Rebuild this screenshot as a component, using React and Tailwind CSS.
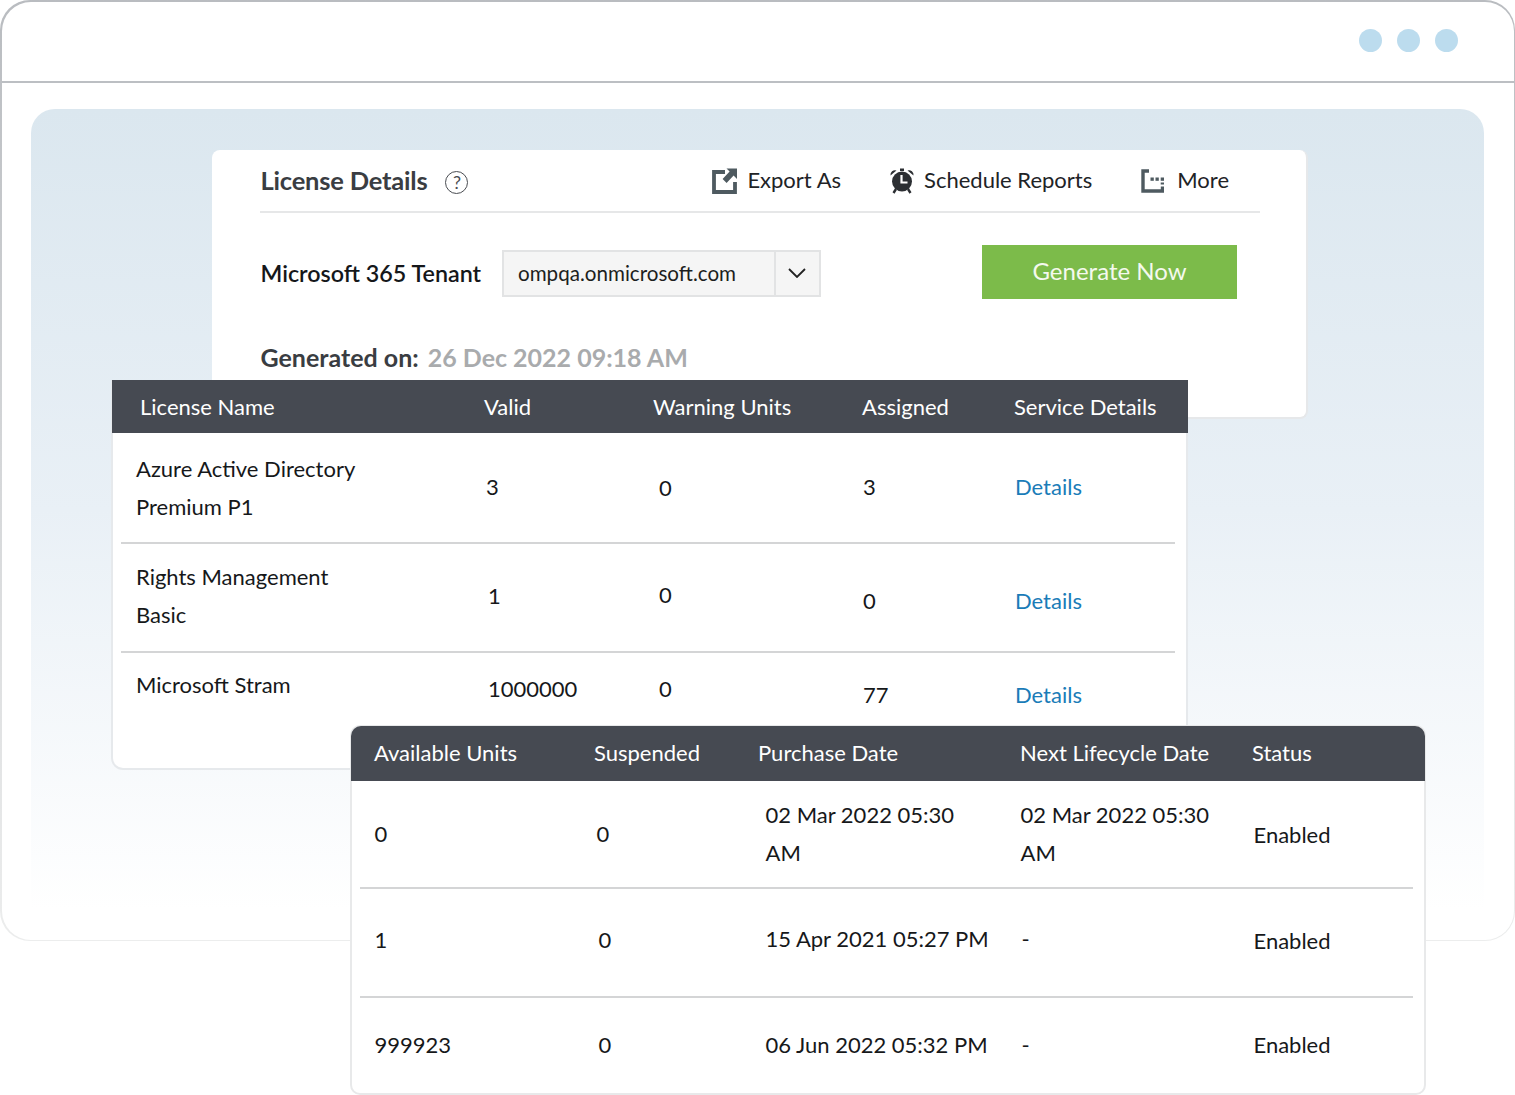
const font = "font-['Lato',sans-serif]";

function ExportIcon() {
  return (
    <svg width="25" height="26" viewBox="0 0 25 26" className="block">
      <path d="M13 4H2v20h21v-10" fill="none" stroke="#4e5a60" strokeWidth="3.800" />
      <path d="M14.500 0.500H25V11l-3.400-3.400-7 7.400-4-4 7-7.400z" fill="#4e5a60" />
    </svg>
  );
}

function AlarmIcon() {
  return (
    <svg width="24" height="26" viewBox="0 0 24 26" className="block">
      <path d="M0.500 7.500a4.500 4.500 0 0 1 6-5z M23.500 7.500a4.500 4.500 0 0 0-6-5z" fill="#2c2f33" />
      <rect x="10" y="0.500" width="4" height="2.500" fill="#2c2f33" />
      <circle cx="12" cy="13.500" r="10" fill="#2c2f33" />
      <path d="M11.500 7v7.500h6" fill="none" stroke="#fff" strokeWidth="2.200" />
      <path d="M6 21l-2.500 4M18 21l2.500 4" stroke="#2c2f33" strokeWidth="2.400" />
    </svg>
  );
}

function MoreIcon() {
  return (
    <svg width="23" height="24" viewBox="0 0 23 24" className="block">
      <path d="M8 2H2v20h19.500v-4.500" fill="none" stroke="#4e5a60" strokeWidth="3.400" />
      <rect x="9.500" y="8.500" width="3.300" height="3.300" fill="#4e5a60" />
      <rect x="14.500" y="8.500" width="3.300" height="3.300" fill="#4e5a60" />
      <rect x="19.700" y="8.500" width="3.300" height="3.300" fill="#4e5a60" />
      <rect x="19.700" y="13.500" width="3.300" height="2" fill="#4e5a60" />
    </svg>
  );
}

const licenseRows = [
  {
    h: "h-[111px]",
    line: true,
    cells: [
      ["pt-[17px]", <>Azure Active Directory<br />Premium P1</>],
      ["pt-[35px]", "3"],
      ["pt-[36px]", "0"],
      ["pt-[35px]", "3"],
      ["pt-[35px] text-[#1a7cb8]", "Details"],
    ],
  },
  {
    h: "h-[109px]",
    line: true,
    cells: [
      ["pt-[14px]", <>Rights Management<br />Basic</>],
      ["pt-[33px] pl-[2px]", "1"],
      ["pt-[32px]", "0"],
      ["pt-[38px]", "0"],
      ["pt-[38px] text-[#1a7cb8]", "Details"],
    ],
  },
  {
    h: "h-[99px]",
    cells: [
      ["pt-[13px]", "Microsoft Stram"],
      ["pt-[17px] pl-[2px]", "1000000"],
      ["pt-[17px]", "0"],
      ["pt-[23px]", "77"],
      ["pt-[23px] text-[#1a7cb8]", "Details"],
    ],
  },
];

const unitRows = [
  {
    h: "h-[108px]",
    line: true,
    cells: [
      ["pt-[34px]", "0"],
      ["pt-[34px]", "0"],
      ["pt-[15px]", <>02 Mar 2022 05:30<br />AM</>],
      ["pt-[15px]", <>02 Mar 2022 05:30<br />AM</>],
      ["pt-[35px]", "Enabled"],
    ],
  },
  {
    h: "h-[109px]",
    line: true,
    cells: [
      ["pt-[32px]", "1"],
      ["pt-[32px] pl-[2px]", "0"],
      ["pt-[31px]", "15 Apr 2021 05:27 PM"],
      ["pt-[31px] pl-px", "-"],
      ["pt-[33px]", "Enabled"],
    ],
  },
  {
    h: "h-[96px]",
    cells: [
      ["pt-[28px]", "999923"],
      ["pt-[28px] pl-[2px]", "0"],
      ["pt-[28px]", "06 Jun 2022 05:32 PM"],
      ["pt-[28px] pl-px", "-"],
      ["pt-[28px]", "Enabled"],
    ],
  },
];

function Rows({ rows, cols }) {
  return rows.map((row, i) => (
    <div key={i} className={`grid ${cols} ${row.h} ${row.line ? "border-b-2 border-[#d4d5d6]" : ""} text-[22px] leading-[38px] text-[#16181a]`}>
      {row.cells.map(([cls, text], j) => (
        <div key={j} className={cls}>{text}</div>
      ))}
    </div>
  ));
}

export default function App() {
  return (
    <div className={`relative w-[1515px] h-[1095px] overflow-hidden bg-white ${font}`}>
      {/* browser frame */}
      <div className="h-[941px] rounded-[30px] bg-gradient-to-b from-[#b9bcc0] via-[#d5d7d9] to-[#eceded] p-[1.5px]">
        <div className="h-full rounded-[29px] bg-white flex flex-col">
          <div className="h-[81px] border-b-2 border-[#bcbfc3] flex items-center justify-end gap-[15px] pr-[56px] pb-[2px] shrink-0">
            <div className="w-[23px] h-[23px] rounded-full bg-[#bcdcee]" />
            <div className="w-[23px] h-[23px] rounded-full bg-[#bcdcee]" />
            <div className="w-[23px] h-[23px] rounded-full bg-[#bcdcee]" />
          </div>
          <div className="flex-1 pt-[26px] pl-[29.500px] pr-[29.500px] pb-[30px]">
            <div className="h-full rounded-t-[24px] bg-gradient-to-b from-[#dbe7ef] via-[#e9f0f6] to-white" />
          </div>
        </div>
      </div>

      {/* license details card */}
      <div className="absolute left-[212px] top-[150px] w-[1096px] h-[269px] rounded-[8px] bg-white border-b-2 border-r-2 border-[#e6e8ea] pl-[48px] pr-[46px]">
        <div className="h-[63px] border-b-2 border-[#e6e7e8] flex items-center">
          <div className="text-[25.500px] font-bold text-[#3a3d42] tracking-[-0.2px] ml-[0.5px]">License Details</div>
          <div className="ml-[18px] mt-[3px] w-[23px] h-[23px] rounded-full border-[1.500px] border-[#4a4d52] flex items-center justify-center text-[18px] text-[#4a4d52]">?</div>
          <div className="ml-auto flex items-center gap-[10px] text-[22px] text-[#212326]">
            <ExportIcon />
            <span className="pb-[2px]">Export As</span>
          </div>
          <div className="ml-[49px] flex items-center gap-[10px] text-[22px] text-[#212326]">
            <AlarmIcon />
            <span className="pb-[2px]">Schedule Reports</span>
          </div>
          <div className="ml-[49px] mr-[31px] flex items-center gap-[13px] text-[22px] text-[#212326]">
            <MoreIcon />
            <span className="pb-[2px]">More</span>
          </div>
        </div>
        <div className="flex items-center mt-[32px]">
          <div className="text-[23.300px] font-semibold text-[#15171a] w-[242px] pt-[3px] pl-[0.5px]">Microsoft 365 Tenant</div>
          <div className="w-[319px] h-[47px] mt-[2px] flex border-2 border-[#e2e3e4] bg-[#f5f5f5]">
            <div className="flex-1 pl-[14px] flex items-center text-[20.600px] text-[#1c1e20]">ompqa.onmicrosoft.com</div>
            <div className="w-[45px] border-l-2 border-[#e2e3e4] flex items-center justify-center pr-[2px]">
              <svg width="18" height="10" viewBox="0 0 18 10"><path d="M1 1l8 8 8-8" fill="none" stroke="#222" strokeWidth="1.800" /></svg>
            </div>
          </div>
          <div className="ml-[161px] w-[255px] h-[54px] bg-[#7cbb4a] flex items-center justify-center pb-[2px] text-[24px] text-[#f4f9ee]">Generate Now</div>
        </div>
        <div className="mt-[40px] ml-[0.5px] text-[25px] font-bold">
          <span className="text-[#3a3d42]">Generated on:</span>
          <span className="text-[#a9abad] ml-[9px]">26 Dec 2022 09:18 AM</span>
        </div>
      </div>

      {/* license table */}
      <div className="absolute left-[111px] top-[380px] w-[1077px] h-[390px] rounded-b-[12px] bg-white border-l-2 border-r-2 border-b-2 border-[#e6e9ec]">
        <div className="-ml-px -mr-[2px] h-[53px] bg-[#464a52] text-white text-[22px] grid grid-cols-[344px_169px_209px_152px_1fr] items-center pl-[28px]">
          <div>License Name</div>
          <div>Valid</div>
          <div>Warning Units</div>
          <div>Assigned</div>
          <div>Service Details</div>
        </div>
        <div className="ml-[8px] mr-[11px]">
          <Rows rows={licenseRows} cols="grid-cols-[350px_173px_204px_152px_1fr] pl-[15px]" />
        </div>
      </div>

      {/* units table */}
      <div className="absolute left-[350px] top-[725px] w-[1076px] h-[370px] rounded-[10px] bg-white border-2 border-[#e8e9ea]">
        <div className="-mx-[1px] -mt-[1px] h-[55px] rounded-t-[10px] bg-[#464a52] text-white text-[22px] grid grid-cols-[220px_164px_262px_232px_1fr] items-center pl-[23px] pb-[3px]">
          <div>Available Units</div>
          <div>Suspended</div>
          <div>Purchase Date</div>
          <div>Next Lifecycle Date</div>
          <div>Status</div>
        </div>
        <div className="ml-[8px] mr-[11px]">
          <Rows rows={unitRows} cols="grid-cols-[222px_169px_255px_233px_1fr] pl-[14.500px]" />
        </div>
      </div>
    </div>
  );
}
